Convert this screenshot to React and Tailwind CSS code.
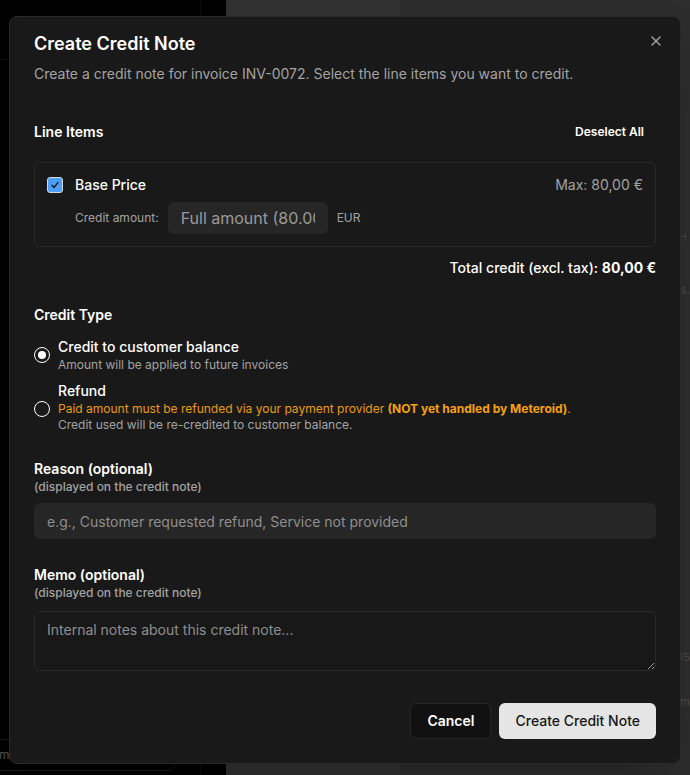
import React from "react";

function Radio({ checked }) {
  return (
    <span className="flex h-4 w-4 shrink-0 items-center justify-center rounded-full border-[1.5px] border-white">
      {checked && <span className="h-[8px] w-[8px] rounded-full bg-white" />}
    </span>
  );
}

export default function App() {
  return (
    <div className="relative h-[775px] w-[690px] overflow-hidden bg-black font-['Inter','Liberation_Sans',sans-serif]">
      {/* background page */}
      <div className="flex h-full">
        <div className="flex w-[226px] bg-black">
          <div className="flex w-[201px] flex-col border-r border-[#0c0c0c]">
            <div className="h-[60px] border-b border-[#0c0c0c]" />
            <div className="flex-1" />
            <div className="mb-[4px] ml-[-12px] flex h-[32px] w-[187px] items-center rounded-md border border-[#1a1a1a] pl-[10px] text-[12px] text-[#555]">
              m
            </div>
          </div>
        </div>
        <div className="w-[174px] bg-[#313131]" />
        <div className="flex flex-1 flex-col items-end bg-[#2d2d2d] text-[11px] leading-none text-[#4a4a4a]">
          <span className="mr-[3px] mt-[232px]">H</span>
          <span className="mr-0 mt-[42px]">cs.</span>
          <span className="mr-0 mt-[356px]">45</span>
          <span className="mr-0 mt-[34px]">im</span>
        </div>
      </div>

      {/* dialog */}
      <div className="absolute left-[9px] top-[16px] w-[672px] rounded-lg border border-[#2a2a2a] bg-[#191919] px-6 pb-6 pt-[13px] shadow-2xl">
        <button className="absolute right-4 top-4 text-[#a3a3a3]">
          <svg width="16" height="16" viewBox="0 0 24 24" fill="none" stroke="currentColor" strokeWidth="2" strokeLinecap="round" strokeLinejoin="round">
            <path d="M18 6 6 18" />
            <path d="m6 6 12 12" />
          </svg>
        </button>

        <div className="flex flex-col gap-1.5">
          <h2 className="text-lg font-semibold leading-7 text-white">Create Credit Note</h2>
          <p className="text-sm text-[#a3a3a3]">
            Create a credit note for invoice INV-0072. Select the line items you want to credit.
          </p>
        </div>

        {/* Line items */}
        <div className="mt-[30px] flex h-9 items-center justify-between">
          <span className="text-sm font-semibold text-white">Line Items</span>
          <button className="flex h-9 items-center rounded-md px-3 text-xs font-semibold text-white">
            Deselect All
          </button>
        </div>

        <div className="mt-3 rounded-md border border-[#2a2a2a] p-3">
          <div className="flex h-5 items-center">
            <span className="flex h-4 w-4 items-center justify-center rounded-[3px] border border-[#d8d8d8] bg-[#4d9ef6]">
              <svg width="12" height="12" viewBox="0 0 12 12" fill="none" stroke="#1a1a1a" strokeWidth="1.3" strokeLinecap="round" strokeLinejoin="round">
                <path d="M3 6.3 5 8.5 9 3.5" />
              </svg>
            </span>
            <span className="ml-3 text-sm font-medium text-white">Base Price</span>
            <span className="ml-auto text-sm text-[#a3a3a3]">Max: 80,00 €</span>
          </div>
          <div className="mt-[7px] flex items-center gap-2 pl-7">
            <span className="text-xs text-[#a3a3a3]">Credit amount:</span>
            <input
              className="ml-px h-8 w-40 rounded-md border border-transparent bg-[#262626] px-3 text-base text-white outline-none placeholder:text-[#9a9a9a]"
              placeholder="Full amount (80.00 EUR)"
              readOnly
            />
            <span className="ml-px text-xs text-[#a3a3a3]">EUR</span>
          </div>
        </div>

        <div className="mt-[11px] text-right text-sm font-medium text-white">
          Total credit (excl. tax): <span className="font-bold">80,00 €</span>
        </div>

        {/* Credit Type */}
        <div className="mt-[27px] text-sm font-semibold text-white">Credit Type</div>
        <div className="mt-3 flex flex-col gap-2">
          <div className="flex items-center gap-2">
            <Radio checked />
            <div className="flex flex-col">
              <span className="text-sm font-medium leading-5 text-white">Credit to customer balance</span>
              <span className="text-xs text-[#a3a3a3]">Amount will be applied to future invoices</span>
            </div>
          </div>
          <div className="flex items-center gap-2">
            <span className="mt-[4px]">
              <Radio />
            </span>
            <div className="flex flex-col">
              <span className="text-sm font-medium leading-5 text-white">Refund</span>
              <span className="text-xs text-[#eb9a12]">
                Paid amount must be refunded via your payment provider{" "}
                <span className="font-bold text-[#f5a10f]">(NOT yet handled by Meteroid)</span>.
              </span>
              <span className="text-xs text-[#a3a3a3]">Credit used will be re-credited to customer balance.</span>
            </div>
          </div>
        </div>

        {/* Reason */}
        <div className="mt-[26px] text-sm font-semibold text-white">Reason (optional)</div>
        <div className="text-xs font-medium text-[#a3a3a3]">(displayed on the credit note)</div>
        <input
          className="mt-2 h-9 w-full rounded-md border border-transparent bg-[#262626] px-3 text-sm text-white outline-none placeholder:text-[#8f8f8f]"
          placeholder="e.g., Customer requested refund, Service not provided"
          readOnly
        />

        {/* Memo */}
        <div className="mt-[26px] text-sm font-semibold text-white">Memo (optional)</div>
        <div className="text-xs font-medium text-[#a3a3a3]">(displayed on the credit note)</div>
        <textarea
          className="mt-[10px] block h-[60px] min-h-[60px] w-full rounded-md border border-[#2a2a2a] bg-[#181818] px-3 py-2 text-sm text-white outline-none [color-scheme:dark] placeholder:text-[#8f8f8f]"
          placeholder="Internal notes about this credit note..."
          readOnly
        />

        <div className="mt-8 flex justify-end gap-2">
          <button className="h-9 rounded-md border border-[#262626] bg-[#111111] px-4 text-sm font-semibold text-white">
            Cancel
          </button>
          <button className="h-9 rounded-md bg-[#e5e5e5] px-4 text-sm font-medium text-[#171717]">
            Create Credit Note
          </button>
        </div>
      </div>
    </div>
  );
}
